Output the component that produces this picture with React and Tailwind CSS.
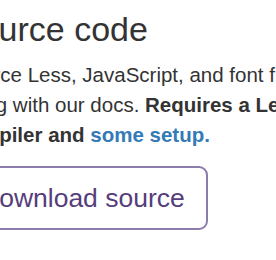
import React from "react";

const App = () => {
  return (
    <div className="w-[276px] h-[260px] overflow-hidden bg-white text-[#333]" style={{ fontFamily: '"Liberation Sans", Arial, sans-serif' }}>
      <div className="-ml-[43px] w-[400px] pt-[11px]">
        {/* ---------- HEADING ---------- */}
        <h3 className="text-[34px] leading-[37px] font-normal mb-[12px]">Source code</h3>

        {/* ---------- DESCRIPTION ---------- */}
        <p className="text-[20.5px] leading-[30px] whitespace-nowrap mb-[16px]">
          Source Less, JavaScript, and font files,
          <br />
          along with our docs. <strong>Requires a Less</strong>
          <br />
          <strong>
            compiler and <a href="#grunt" className="text-[#337ab7]">some setup.</a>
          </strong>
        </p>

        {/* ---------- BUTTON ---------- */}
        <button className="h-[64px] pt-[2px] px-[21px] border-2 border-[#8b7cab] rounded-[9px] text-[26.5px] text-[#563d7c] bg-white">
          Download source
        </button>
      </div>
    </div>
  );
};

export default App;
